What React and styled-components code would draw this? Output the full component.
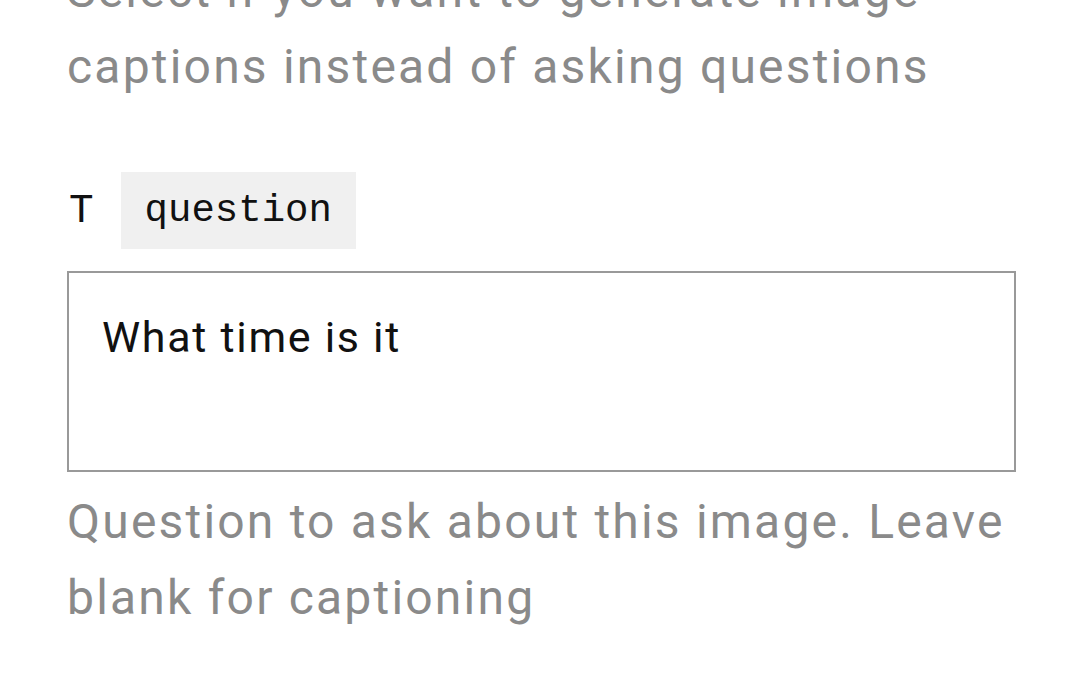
import React from "react";
import styled, { createGlobalStyle } from "styled-components";

const Global = createGlobalStyle`
  html, body { margin: 0; padding: 0; background: #fff; }
  body { font-family: Roboto, "Noto Sans", sans-serif; overflow: hidden; }
`;

const Page = styled.div`
  padding: 0 60px 0 67px;
  display: flex;
  flex-direction: column;
`;

const Hint = styled.p`
  margin: ${(p) => p.$mt || "0"} 0 0;
  color: #8a8a8a;
  font-size: 48px;
  line-height: 76px;
  letter-spacing: 2.2px;
  font-weight: 400;
`;

const LabelRow = styled.div`
  display: flex;
  align-items: center;
  gap: 27px;
  margin-top: 67px;
`;

const TypeGlyph = styled.span`
  font-family: "Liberation Mono", monospace;
  font-size: 41px;
  color: #111;
  padding-left: 2px;
`;

const NameChip = styled.code`
  background: #f0f0f0;
  padding: 0 24px;
  height: 77px;
  display: flex;
  align-items: center;
  font-family: "Liberation Mono", monospace;
  font-size: 39px;
  color: #111;
`;

const Field = styled.textarea`
  margin-top: 22px;
  box-sizing: border-box;
  width: 949px;
  height: 201px;
  border: 2px solid #999;
  border-radius: 0;
  padding: 38px 33px;
  font-family: Roboto, "Noto Sans", sans-serif;
  font-size: 43px;
  line-height: 52px;
  letter-spacing: 1.7px;
  color: #111;
  resize: none;
  outline: none;
`;

export default function App() {
  return (
    <>
      <Global />
      <Page>
        <Hint $mt="-47px">
          Select if you want to generate image captions instead of asking questions
        </Hint>
        <LabelRow>
          <TypeGlyph>T</TypeGlyph>
          <NameChip>question</NameChip>
        </LabelRow>
        <Field defaultValue="What time is it" />
        <Hint $mt="12px">
          Question to ask about this image. Leave blank for captioning
        </Hint>
      </Page>
    </>
  );
}
